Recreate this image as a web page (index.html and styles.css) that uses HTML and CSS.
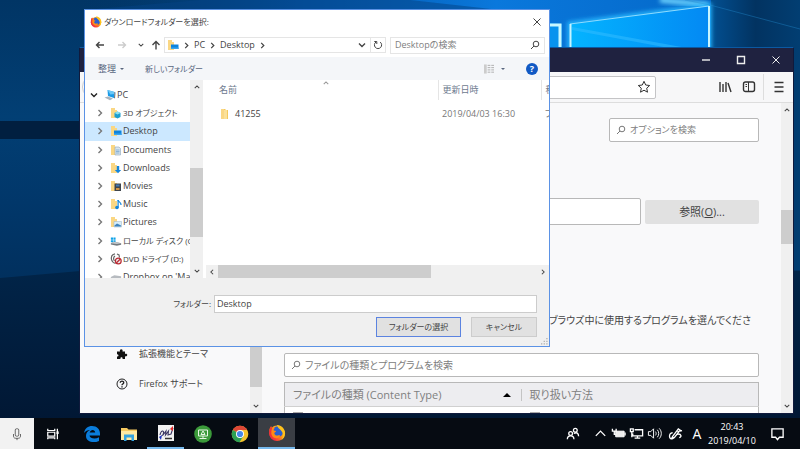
FILE: index.html
```html
<!DOCTYPE html>
<html lang="ja">
<head>
<meta charset="utf-8">
<title>ダウンロードフォルダーを選択</title>
<link rel="stylesheet" href="styles.css">
</head>
<body>
<svg class="defs" aria-hidden="true">
  <defs>
    <linearGradient id="fxg" x1="1" y1="0" x2="0" y2="1"><stop offset="0" stop-color="#ffd92e"/><stop offset=".45" stop-color="#ff9417"/><stop offset=".8" stop-color="#f5303f"/><stop offset="1" stop-color="#d4145f"/></linearGradient>
    <symbol id="firefox" viewBox="0 0 20 20">
      <circle cx="10" cy="10.4" r="8.6" fill="url(#fxg)"/>
      <circle cx="10.8" cy="8.6" r="6" fill="#2b5fd0"/>
      <path d="M10 1c5 0 9 4 9 9.500a9 9 0 0 1-4.500 7.500c2.500-3 2.500-6 1.500-8.500C15 6.500 12 5.500 11 3.500 10.500 2.500 10 1.500 10 1z" fill="#ffc21c"/>
      <path d="M1.500 7c.3-1.800 1-3.400 2-4.500.2 1 .6 1.500 1 2 1-.3 2-.2 3 .2-1 .8-1.300 1.600-1 2.500l2.500.5c.2 1-1.600 1.400-2 2.300 0 2 2 3.500 4.500 2.600 2-.3 2.500.5 1.500 1.700-1.500 2-6 2-8-.8C3.500 11 2.500 9 1.500 7z" fill="#ff8a16"/>
      <path d="M1.500 7c-.8 4 .3 8 4 10.500C3.500 14 3 10 4.500 4.500c-.4-.5-.8-1-1-2-1 1.100-1.700 2.700-2 4.500z" fill="#f0333a"/>
    </symbol>
    <symbol id="folder" viewBox="0 0 12 12"><path d="M2 1h4l1 1h2v9H2z" fill="#f4c95d"/><path d="M5 2h3v9H5z" fill="#fbe19a"/><path d="M2 1h3v10H2z" fill="#fad784"/></symbol>
    <symbol id="f-desktop" viewBox="0 0 12 12"><path d="M1 1h4v2h2v8H1z" fill="#fad784"/><path d="M4 5.500h7.500V10H4z" fill="#0c83dd"/><path d="M4 8.500h7.500V10H4z" fill="#39a5ee"/></symbol>
    <symbol id="f-3d" viewBox="0 0 12 12"><path d="M1 1h4v2h2v8H1z" fill="#fad784"/><path d="M4.500 6l3-1.500 3 1.500v4l-3 1.500-3-1.500z" fill="#1b9ed0"/><path d="M4.500 6l3-1.500 3 1.500-3 1.500z" fill="#8ae0f2"/></symbol>
    <symbol id="f-doc" viewBox="0 0 12 12"><path d="M1 1h4v2h2v8H1z" fill="#fad784"/><path d="M5 3h4l1.500 1.500V11H5z" fill="#d8e5f0" stroke="#8fa6ba" stroke-width=".6"/><path d="M6 6h3.500M6 7.500h3.500M6 9h3.500" stroke="#5790c2" stroke-width=".6"/></symbol>
    <symbol id="f-down" viewBox="0 0 12 12"><path d="M1 1h4v2h2v8H1z" fill="#fad784"/><path d="M6.800 4h2.400v4h2L8 11.300 4.800 8h2z" fill="#1385dc"/></symbol>
    <symbol id="f-movie" viewBox="0 0 12 12"><path d="M1 1h4v2h2v8H1z" fill="#fad784"/><path d="M4.500 3.500H11V11H4.500z" fill="#3f454c"/><path d="M6 4.500h3.500v2H6z" fill="#4279b5"/><path d="M6 8h3.500v2H6z" fill="#ce9144"/></symbol>
    <symbol id="f-music" viewBox="0 0 12 12"><path d="M1 1h4v2h2v8H1z" fill="#fad784"/><path d="M8 2c0 2 3.500 2 3 5" fill="none" stroke="#1385dc" stroke-width="1.200"/><path d="M7.500 2h1.200v7.500H7.500z" fill="#1385dc"/><circle cx="7" cy="9.500" r="1.800" fill="#1385dc"/></symbol>
    <symbol id="f-pic" viewBox="0 0 12 12"><path d="M1 1h4v2h2v8H1z" fill="#fad784"/><path d="M4 5.500h7.500V11H4z" fill="#d7edf9" stroke="#9ab3c5" stroke-width=".5"/><path d="M4.500 9.500l2.500-2 4 2V10.500H4.500z" fill="#3e83bd"/></symbol>
    <symbol id="pc" viewBox="0 0 12 12"><path d="M3.500 1l7 2-.5 6-6-2z" fill="#1a9be8"/><path d="M3.500 1l7 2-.2 2-4 .5z" fill="#6cc8f6"/><path d="M10.500 3l1 .5-.5 6-1-.5z" fill="#687480"/><path d="M.5 8.500L4 7.500l5 2-3 1.800z" fill="#aab4bd"/></symbol>
    <symbol id="disk" viewBox="0 0 14 12"><path d="M1 2h2.500v2.500H1zM4 2h2.500v2.500H4zM1 5h2.500v2.500H1zM4 5h2.500v2.500H4z" fill="#10a3e8"/><path d="M1 8.500L5 7l8 1.500v1.800L8 11.500 1 10z" fill="#747b80"/><path d="M1 8.500L5 7l8 1.500-5 1z" fill="#c3c8cc"/></symbol>
    <symbol id="dvd" viewBox="0 0 12 12"><path d="M5 .8C2 1.500 1 4 1.500 6.500S4 10 5.500 10.500M5 3C3.500 4 3 6 4.500 8M7 1l2 1 .5 2.500" fill="none" stroke="#666" stroke-width="1.200"/><circle cx="8.300" cy="8" r="2.900" fill="#eee" stroke="#ba2b34" stroke-width="1.200"/><path d="M6.300 10l4-4" stroke="#ba2b34" stroke-width="1.200"/></symbol>
    <symbol id="drive" viewBox="0 0 14 12"><path d="M1 6l4-2 8 1v3l-5 1-7-1z" fill="#b7bbc0"/></symbol>
    <symbol id="right" viewBox="0 0 8 8"><path d="M2.500 1l3 3-3 3" class="line bold"/></symbol>
    <symbol id="down" viewBox="0 0 8 8"><path d="M1 2.500l3 3 3-3" class="line bold"/></symbol>
    <symbol id="up" viewBox="0 0 8 8"><path d="M1 5.500l3-3 3 3" class="line bold"/></symbol>
    <symbol id="left" viewBox="0 0 8 8"><path d="M5.500 1l-3 3 3 3" class="line bold"/></symbol>
    <symbol id="arrow" viewBox="0 0 10 10"><path d="M9 5H1.500M4.500 2L1.500 5l3 3" class="line bold"/></symbol>
    <symbol id="lens" viewBox="0 0 10 10"><circle cx="6" cy="4" r="2.800" class="line"/><path d="M4 6L1 9" class="line"/></symbol>
    <symbol id="close" viewBox="0 0 10 10"><path d="M1.500 1.500l7 7M8.500 1.500l-7 7" class="line"/></symbol>
  </defs>
</svg>

<main class="desktop">
  <svg class="wallpaper" viewBox="0 0 800 449" preserveAspectRatio="none" aria-hidden="true">
    <defs>
      <linearGradient id="base" x2="0" y2="1"><stop offset="0" stop-color="#013565"/><stop offset=".26" stop-color="#023f74"/><stop offset=".45" stop-color="#01376a"/><stop offset=".62" stop-color="#01305e"/><stop offset="1" stop-color="#012a55"/></linearGradient>
      <linearGradient id="ground" x2="0" y2="1"><stop offset="0" stop-color="#012448"/><stop offset="1" stop-color="#011530"/></linearGradient>
      <linearGradient id="beam"><stop offset="0" stop-color="#023a70" stop-opacity="0"/><stop offset=".35" stop-color="#0456a8"/><stop offset=".65" stop-color="#0a78dc"/><stop offset="1" stop-color="#0468c8"/></linearGradient>
      <linearGradient id="dark"><stop offset="0" stop-color="#024f91"/><stop offset=".5" stop-color="#023361"/><stop offset="1" stop-color="#023e72"/></linearGradient>
      <linearGradient id="pane"><stop offset="0" stop-color="#04b4ff"/><stop offset="1" stop-color="#0389f3"/></linearGradient>
      <filter id="glow"><feGaussianBlur stdDeviation="2"/></filter>
    </defs>
    <path fill="url(#base)" d="M0 0h800v449H0z"/>
    <path fill="#011f40" d="M0 121h90v18H0z"/>
    <path fill="url(#ground)" d="M0 278l80-7h720v178H0z"/>
    <path fill="url(#beam)" d="M80 0h640v60H80z"/>
    <path fill="#034284" d="M200 0h210l90 10H84z" opacity=".5"/>
    <path fill="url(#dark)" d="M711 0h89v270h-89z"/>
    <path d="M660 0l48 5" stroke="#70d6ff" stroke-width="5" filter="url(#glow)"/>
    <path fill="#0793ee" d="M540 22l22 2v24h-22z"/>
    <path d="M550 25h10v22" fill="none" stroke="#c8f7ff" stroke-width="3"/>
    <path d="M570 24L709 6v42H570z" fill="none" stroke="#27b8ff" stroke-width="5" filter="url(#glow)"/>
    <path fill="url(#pane)" d="M570 24L709 6v42H570z"/>
    <path fill="#33bcff" opacity=".55" d="M572 27l115 21h-18L572 30z"/>
    <path d="M570 24L709 6" fill="none" stroke="#8edcff"/>
    <path d="M570.500 48V24M709 6v42" fill="none" stroke="#c5f4ff" stroke-width="2"/>
    <path d="M685 0l25 5 90 24" fill="none" stroke="#238bd0" opacity=".4"/>
  </svg>

  <section class="browser" aria-label="Firefox">
    <header class="browser-title">
      <button aria-label="最小化"><svg viewBox="0 0 10 10"><path d="M1 5h8" class="line bold"/></svg></button>
      <button aria-label="最大化"><svg viewBox="0 0 10 10"><path d="M1.500 1.500h7v7h-7z" class="line bold"/></svg></button>
      <button aria-label="閉じる"><svg><use href="#close"/></svg></button>
    </header>
    <div class="browser-bar">
      <button class="back" aria-label="戻る"></button>
      <div class="url">
        <input type="text" aria-label="アドレス">
        <button aria-label="ブックマーク"><svg viewBox="0 0 14 14"><path d="M7 1.300l1.700 3.700 4 .5-3 2.700.8 4L7 10.200l-3.500 2 .8-4-3-2.700 4-.5z" class="line"/></svg></button>
      </div>
      <div class="bar-tools">
        <button aria-label="ライブラリ"><svg viewBox="0 0 14 14"><path d="M2 2v10M5 4v8M8 2v10M10 3l3 9" class="line bold"/></svg></button>
        <button aria-label="サイドバー"><svg viewBox="0 0 14 14"><rect x="1.500" y="2" width="11" height="9.500" rx="2" class="line bold"/><path d="M6.500 2v9.500M3.500 4.500h1.500M3.500 6.500h1.500" class="line"/></svg></button>
      </div>
      <button class="menu" aria-label="メニュー"><svg viewBox="0 0 14 14"><path d="M2.500 2.500h9M2.500 7h9M2.500 11.500h9" class="line bold"/></svg></button>
    </div>
    <div class="browser-body">
      <nav class="categories">
        <a href="#"><svg viewBox="0 0 12 12"><path d="M1 3.500h3c-1-3 3.500-3 2.500 0H9V6c3-1 3 3 0 2.300V11H6.500c.8-2.500-2.800-2.500-2 0H1V8.500c2 .5 2-2.800 0-2.300z" fill="#111"/></svg>拡張機能とテーマ</a>
        <a href="#"><svg viewBox="0 0 12 12"><circle cx="6" cy="6" r="5" class="line"/><path d="M4.300 4.800c0-2.300 3.500-2.100 3.400 0C7.600 6 6 6 6 7.200M6 8.200v1.200" class="line bold"/></svg>Firefox サポート</a>
      </nav>
      <div class="vscroll side-scroll"><span class="thumb"></span><svg><use href="#down"/></svg></div>
      <div class="prefs">
        <label class="field option-search"><svg><use href="#lens"/></svg><input type="text" placeholder="オプションを検索" aria-label="オプションを検索"></label>
        <div class="save-to"><input type="text" aria-label="保存先"><button>参照(<u>O</u>)...</button></div>
        <p>ブラウズ中に使用するプログラムを選んでくださ</p>
        <label class="field type-search"><svg><use href="#lens"/></svg><input type="text" placeholder="ファイルの種類とプログラムを検索" aria-label="ファイルの種類とプログラムを検索"></label>
        <table class="types">
          <thead><tr><th><div><span>ファイルの種類 (Content Type)</span><svg viewBox="0 0 8 8"><path d="M0 6l4-4 4 4z"/></svg></div></th><th>取り扱い方法</th></tr></thead>
          <tbody><tr><td><i></i></td><td><i></i></td></tr></tbody>
        </table>
      </div>
      <div class="vscroll page-scroll"><svg><use href="#up"/></svg><span class="thumb"></span><svg><use href="#down"/></svg></div>
    </div>
  </section>

  <section class="dialog" role="dialog" aria-labelledby="dlg-title">
    <header class="dialog-title"><svg class="fx"><use href="#firefox"/></svg><h1 id="dlg-title">ダウンロードフォルダーを選択:</h1><button aria-label="閉じる"><svg><use href="#close"/></svg></button></header>
    <div class="dialog-nav">
      <button aria-label="戻る"><svg><use href="#arrow"/></svg></button>
      <button class="faint" aria-label="進む"><svg class="flip"><use href="#arrow"/></svg></button>
      <button class="recent" aria-label="最近の場所"><svg><use href="#down"/></svg></button>
      <button class="parent" aria-label="上へ"><svg viewBox="0 0 10 10"><path d="M5 9.500v-8M1.500 5L5 1.500 8.500 5" class="line bold"/></svg></button>
      <div class="path">
        <svg class="ico"><use href="#f-desktop"/></svg><svg class="sep"><use href="#right"/></svg><a href="#">PC</a><svg class="sep"><use href="#right"/></svg><a href="#">Desktop</a><svg class="sep"><use href="#right"/></svg>
        <button class="history" aria-label="履歴"><svg><use href="#down"/></svg></button>
        <button class="reload" aria-label="更新"><svg viewBox="0 0 10 10"><path d="M3 2a3.600 3.600 0 1 0 4.200.1M1.300 1.500h2.500V4" class="line"/></svg></button>
      </div>
      <label class="find"><input type="text" placeholder="Desktopの検索" aria-label="Desktopの検索"><svg><use href="#lens"/></svg></label>
    </div>
    <div class="dialog-tools">
      <button>整理<span class="caret"></span></button>
      <button class="new">新しいフォルダー</button>
      <button class="view" aria-label="表示方法"><svg viewBox="0 0 11 10"><path d="M0 0h3v10H0z" fill="#ccc"/><path d="M4 1h3M8 1h3M4 3.500h3M8 3.500h3M4 6h3M8 6h3M4 8.500h3M8 8.500h3" stroke="#aaa"/></svg><span class="caret"></span></button>
      <button class="help" aria-label="ヘルプ">?</button>
    </div>
    <div class="dialog-body">
      <ul class="tree">
        <li class="root"><svg class="tw"><use href="#down"/></svg><svg class="ico"><use href="#pc"/></svg>PC</li>
        <li class="kana"><svg class="tw"><use href="#right"/></svg><svg class="ico"><use href="#f-3d"/></svg>3D オブジェクト</li>
        <li class="selected"><svg class="tw"><use href="#right"/></svg><svg class="ico"><use href="#f-desktop"/></svg>Desktop</li>
        <li><svg class="tw"><use href="#right"/></svg><svg class="ico"><use href="#f-doc"/></svg>Documents</li>
        <li><svg class="tw"><use href="#right"/></svg><svg class="ico"><use href="#f-down"/></svg>Downloads</li>
        <li><svg class="tw"><use href="#right"/></svg><svg class="ico"><use href="#f-movie"/></svg>Movies</li>
        <li><svg class="tw"><use href="#right"/></svg><svg class="ico"><use href="#f-music"/></svg>Music</li>
        <li><svg class="tw"><use href="#right"/></svg><svg class="ico"><use href="#f-pic"/></svg>Pictures</li>
        <li class="kana"><svg class="tw"><use href="#right"/></svg><svg class="ico"><use href="#disk"/></svg>ローカル ディスク (C:)</li>
        <li class="kana"><svg class="tw"><use href="#right"/></svg><svg class="ico"><use href="#dvd"/></svg>DVD ドライブ (D:)</li>
        <li><svg class="tw"><use href="#right"/></svg><svg class="ico"><use href="#drive"/></svg>Dropbox on 'Mac'</li>
      </ul>
      <div class="vscroll tree-scroll"><svg><use href="#up"/></svg><span class="thumb"></span><svg><use href="#down"/></svg></div>
      <div class="files">
        <svg class="sort"><use href="#up"/></svg>
        <table>
          <thead><tr><th>名前</th><th>更新日時</th><th>種類</th></tr></thead>
          <tbody><tr><td><svg class="ico"><use href="#folder"/></svg>41255</td><td>2019/04/03 16:30</td><td>ファイル</td></tr></tbody>
        </table>
        <div class="hscroll"><svg><use href="#left"/></svg><span class="thumb"></span><svg><use href="#right"/></svg></div>
      </div>
    </div>
    <footer class="dialog-foot">
      <div class="name-row"><label for="folder-name">フォルダー:</label><input id="folder-name" type="text" value="Desktop"></div>
      <div class="actions"><button class="primary">フォルダーの選択</button><button>キャンセル</button></div>
      <svg class="grip" viewBox="0 0 8 8"><path d="M6 0h1.500v1.500H6zM3 3h1.500v1.500H3zM6 3h1.500v1.500H6zM0 6h1.500v1.500H0zM3 6h1.500v1.500H3zM6 6h1.500v1.500H6z" fill="#b0b0b0"/></svg>
    </footer>
  </section>
</main>

<footer class="taskbar">
  <button class="mic" aria-label="音声検索"><svg viewBox="0 0 16 16"><rect x="6" y="2" width="4" height="8.500" rx="1.500" class="line"/><path d="M4 8v2.500c0 2 1.500 2.500 4 2.500s4-.5 4-2.500V8M8 13v2" class="line"/></svg></button>
  <button class="tasks" aria-label="タスクビュー"><svg viewBox="0 0 16 16"><path d="M2 2v2h8V2M2 6h8v4.500H2zM2 14v-1.500h8V14M13 2v12" class="line bold"/><path d="M12 5h2.500v3H12z" fill="#fff"/></svg></button>
  <button aria-label="Edge"><svg viewBox="0 0 18 18"><path d="M1 8C1.800 3.500 5 1 9 1c5 0 8 3.500 8 7.500v2H6.500c.3 3 5.500 4.200 9.500 1.800v3.600C10.500 18.500 3 17 3 11 3 8 4.500 6 7 5 4.500 5 2.500 6 1 8zm5.700-.5h5.500C12 4 7.500 4 6.700 7.500z" fill="#0a7ddc"/></svg></button>
  <button aria-label="エクスプローラー"><svg viewBox="0 0 18 18"><path d="M1 3h6l1.500 1.500H17V15H1z" fill="#f5ca61"/><path d="M1 6h16v9H1z" fill="#ffe9a2"/><path d="M4 9.500h10V16h-2.500v-3.500h-5V16H4z" fill="#35a3df"/></svg></button>
  <button class="open" aria-label="アプリ"><svg viewBox="0 0 18 18"><path d="M1 1h16v16H1z" fill="#f2f2f2"/><path d="M3 11c1-5 4-5 3.500-2S4 11.500 6 11l3-4-.5 4 3-4-.5 4 3-1 2-6" fill="none" stroke="#3b3764" stroke-width="1.100"/><path d="M2 13l2 3 1-5z" fill="#1930c2"/><path d="M13 5l3-3v5z" fill="#e12a2a"/><path d="M8 14.500h7" stroke="#333" stroke-width="1.500"/></svg></button>
  <button aria-label="リモート接続"><svg viewBox="0 0 18 18"><circle cx="9" cy="9" r="8.800" fill="#3b9a3a"/><path d="M4.500 5h9v6h-9zM9 11v2M5.500 13.500h7" fill="none" stroke="#e7f6e3"/><path d="M7 9.500l2-3.500 2 3.500z" fill="none" stroke="#e7f6e3"/></svg></button>
  <button aria-label="Chrome"><svg viewBox="0 0 18 18"><circle cx="9" cy="9" r="8.300" fill="#f3c22c"/><path d="M9 9L1.800 4.900A8.300 8.300 0 0 1 16.200 5H9z" fill="#dd4736"/><path d="M9 9l-7.200-4.100A8.300 8.300 0 0 0 8.500 17.300L12.500 11z" fill="#2da054"/><circle cx="9" cy="9" r="4" fill="#fff"/><circle cx="9" cy="9" r="3.100" fill="#4688e9"/></svg></button>
  <button class="open active" aria-label="Firefox"><svg><use href="#firefox"/></svg></button>
  <div class="tray">
    <button class="people" aria-label="People"><svg viewBox="0 0 16 16"><circle cx="6" cy="8" r="2" class="line bold"/><path d="M2.500 14c0-4.500 7-4.500 7 0" class="line bold"/><circle cx="11" cy="4.500" r="2" class="line bold"/><path d="M9.500 8c3-2 5 0 5 3" class="line bold"/></svg></button>
    <button aria-label="隠れているインジケーター"><svg viewBox="0 0 16 16"><path d="M3 10.500l5-5 5 5" class="line bold"/></svg></button>
    <button aria-label="電源"><svg viewBox="0 0 16 16"><path d="M5 5.500h9v6H5z" fill="#eee" stroke="#fff"/><path d="M15 7v3M1.500 3v2.500h4V3M3.500 5.500V9H5" class="line bold"/></svg></button>
    <button aria-label="ネットワーク"><svg viewBox="0 0 16 16"><path d="M6 4h8.500v6.500H4V8M9 10.500V13M6 13h6M1.500 3h3v3h-3zM3 6v6" class="line bold"/></svg></button>
    <button aria-label="音量"><svg viewBox="0 0 16 16"><path d="M1.500 6H4l3-3v10l-3-3H1.500zM9 6c1 1 1 3 0 4M11 4c2 2 2 6 0 8M13 2.500c3 3 3 8 0 11" class="line"/></svg></button>
    <button class="pen" aria-label="ペン"><svg viewBox="0 0 16 16"><path d="M5 11l6-8 2 1.500L7 12l-3 1zM5 7C0 8 1 15 5 13.500s3-5 6-5 4 3 1 4M10 6l5-1" class="line bold"/></svg></button>
    <button class="ime" aria-label="IME">A</button>
    <time class="clock"><span>20:43</span><span>2019/04/10</span></time>
    <button class="notify" aria-label="通知"><svg viewBox="0 0 16 16"><path d="M2 3h12v9h-4l-2 2.500L6 12H2z" class="line bold"/></svg></button>
  </div>
</footer>
</body>
</html>
```
FILE: styles.css
```css
* { box-sizing: border-box; }

body {
  margin: 0;
  height: 100vh;
  display: flex;
  flex-direction: column;
  overflow: hidden;
  color: #444;
  font: 9px/12px "Open Sans", "Noto Sans CJK JP", sans-serif;
  font-feature-settings: "palt";
}

button, input {
  margin: 0;
  padding: 0;
  border: 0;
  background: none;
  color: inherit;
  font: inherit;
  font-feature-settings: inherit;
}
button { display: flex; align-items: center; justify-content: center; }
input { min-width: 0; }
a { color: inherit; text-decoration: none; }
svg { display: block; flex: none; width: 10px; height: 10px; }
.defs { position: absolute; width: 0; height: 0; }
.line { fill: none; stroke: currentColor; stroke-width: 1; }
.line.bold { stroke-width: 1.400; }

.desktop { position: relative; flex: 1; background: #012450; }
.wallpaper { position: absolute; top: 0; left: 0; width: 100%; height: 100vh; }

/* Browser window */
.browser {
  position: absolute;
  inset: 47px 6px 4px 79px;
  display: flex;
  flex-direction: column;
  border: 1px solid #101a3c;
  border-top-color: #0b59a2;
  background: #f9f9fa;
  overflow: hidden;
}
.browser-title { display: flex; justify-content: flex-end; height: 24px; background: #1f2240; color: #eee; }
.browser-title button { width: 35px; }
.browser-bar { display: flex; align-items: center; height: 31px; background: #f7f7f8; border-bottom: 1px solid #ddd; color: #333; }
.back { width: 24px; height: 24px; margin-left: 2px; border: 1px solid #ccc; border-radius: 50%; background: #fff; }
.url { flex: 1; display: flex; height: 23px; margin-left: 60px; border: 1px solid #c4c4c6; border-radius: 2px; background: #fff; }
.url input { flex: 1; }
.url button { width: 22px; }
.browser-bar svg { width: 14px; height: 14px; }
.bar-tools { display: flex; gap: 10px; padding: 0 7px 0 62px; }
.menu { width: 30px; height: 26px; border-left: 1px solid #ddd; }
.browser-body { flex: 1; display: flex; min-height: 0; }
.categories { width: 170px; display: flex; flex-direction: column; justify-content: flex-end; gap: 14px; padding: 0 0 21px 36px; line-height: 16px; }
.categories a { display: flex; align-items: center; gap: 11px; }
.categories svg { width: 12px; height: 12px; color: #222; }

.vscroll { width: 12px; display: flex; flex-direction: column; align-items: center; justify-content: space-between; background: #f0f0f0; color: #444; }
.vscroll svg { width: 6px; height: 6px; margin: 4px 0; }
.thumb { background: #cdcdcd; }
.vscroll .thumb { width: 100%; }
.side-scroll .thumb { flex: 1; margin-bottom: 12px; }
.page-scroll .thumb { height: 34px; margin-bottom: 62px; }

.prefs { flex: 1; min-width: 0; padding: 15px 22px 0; font-size: 10px; overflow: hidden; }
.field { display: flex; align-items: center; gap: 4px; height: 24px; padding: 0 6px; border: 1px solid #b8b8b8; border-radius: 2px; background: #fff; color: #777; }
.field input { flex: 1; }
.field input::placeholder { color: #808080; opacity: 1; }
.option-search { width: 150px; margin-left: auto; font-size: 9px; }
.save-to { display: flex; align-items: center; gap: 4px; margin-top: 56px; }
.save-to input { flex: 1; height: 27px; border: 1px solid #b8b8b8; border-radius: 2px; background: #fff; }
.save-to button { display: block; width: 114px; height: 24px; border-radius: 2px; background: #e1e1e1; font-size: 11px; }
.prefs p { margin: 87px 8px 25px 0; line-height: 16px; text-align: right; white-space: nowrap; }
.types { width: 100%; margin-top: 5px; border: 1px solid #b8b8b8; border-collapse: collapse; background: #fff; font-size: 11px; color: #808080; }
.types th { height: 24px; padding: 0 8px; border-bottom: 1px solid #d0d0d0; background: #ededf0; font-weight: normal; text-align: left; }
.types th:first-child { width: 50%; }
.types th div { display: flex; align-items: center; justify-content: space-between; margin-right: -8px; padding-right: 10px; border-right: 1px solid #c4c4c4; }
.types th svg { width: 8px; height: 8px; }
.types td { padding: 5px 8px; }
.types i { display: block; width: 10px; height: 10px; border: 1px solid #aaa; background: #eee; }

/* Folder picker */
.dialog {
  position: absolute;
  top: 9px;
  left: 84px;
  right: 250px;
  border: 1px solid #5b92e5;
  background: #fff;
}
.dialog-title { display: flex; align-items: center; height: 23px; padding-left: 5px; }
.dialog-title h1 { flex: 1; margin: 0 0 0 2px; font-size: 8px; font-weight: normal; }
.dialog-title .fx { width: 12px; height: 12px; }
.dialog-title button { width: 25px; height: 20px; }
.dialog-nav { display: flex; align-items: center; height: 24px; padding: 0 4px 0 5px; }
.dialog-nav button { width: 20px; height: 16px; }
.dialog-nav .faint { width: 24px; color: #ccc; }
.dialog-nav .recent { width: 14px; }
.dialog-nav .parent { width: 16px; }
.recent svg { width: 6px; height: 6px; }
.flip { transform: scaleX(-1); }
.path { flex: 1; display: flex; align-items: center; height: 16px; padding-left: 2px; border: 1px solid #e5e5e5; }
.path .ico { width: 12px; height: 12px; }
.sep { width: 7px; height: 7px; margin: 0 4px; }
.path .history { width: 16px; margin-left: auto; }
.history svg { width: 8px; height: 8px; }
.path .reload { width: 15px; height: 100%; border-left: 1px solid #e5e5e5; }
.find { display: flex; align-items: center; width: 155px; height: 17px; margin-left: 4px; padding: 0 4px; border: 1px solid #e5e5e5; }
.find input { flex: 1; }
.find input::placeholder { color: #808080; opacity: 1; }
.dialog-tools { display: flex; align-items: center; height: 23px; padding: 0 11px 0 13px; background: #f4f6f9; color: #59677f; }
.caret { width: 0; height: 0; margin-left: 4px; border: 2px solid transparent; border-top-color: currentColor; border-bottom: 0; }
.dialog-tools .new { margin-left: 21px; font-size: 8px; }
.dialog-tools .view { margin-left: auto; }
.view .caret { margin-left: 7px; }
.dialog-tools .help { width: 12px; height: 12px; margin-left: 21px; border-radius: 50%; background: #1159c4; color: #fff; font-weight: bold; }
.dialog-body { display: flex; height: 198px; }
.tree { display: grid; grid-auto-rows: 1fr; width: 105px; height: 206px; margin: 0 0 -8px; padding: 6px 0 0; list-style: none; }
.dialog-body { overflow: hidden; }
.tree li { display: flex; align-items: center; padding-left: 11px; white-space: nowrap; overflow: hidden; }
.tree .root { padding-left: 5px; }
.tree .kana { font-size: 8px; }
.tree .ico { width: 12px; height: 12px; margin: 0 1px 0 6px; }
.tree .tw { width: 8px; height: 8px; color: #777; }
.tree .root .tw { color: #222; }
.tree .selected { background: #cce8ff; }
.tree-scroll { width: 13px; }
.tree-scroll .thumb { height: 69px; margin: 60px 0 14px; }
.files { position: relative; flex: 1; min-width: 0; display: flex; flex-direction: column; margin-left: 3px; overflow: hidden; }
.sort { position: absolute; top: 0; left: 117px; width: 6px; height: 6px; color: #999; }
.files table { width: 100%; table-layout: fixed; border-collapse: collapse; color: #777; white-space: nowrap; }
.files th { height: 20px; padding: 0 0 0 4px; border-right: 1px solid #e5e5e5; color: #6d7a8e; font-weight: normal; text-align: left; }
.files th:first-child { padding-left: 13px; }
.files th:nth-child(2) { width: 103px; }
.files th:last-child { width: 8px; border: 0; }
.files td { height: 27px; padding: 0 0 0 4px; overflow: hidden; }
.files th:last-child, .files td:last-child { overflow: hidden; text-overflow: clip; }
.files td:first-child { display: flex; align-items: center; padding-left: 13px; color: #444; }
.files td .ico { width: 12px; height: 12px; margin-right: 4px; }
.hscroll { display: flex; align-items: center; height: 13px; margin-top: auto; background: #f0f0f0; }
.hscroll svg { width: 6px; height: 6px; margin: 0 3px; }
.hscroll .thumb { width: 213px; height: 100%; margin-right: auto; }
.dialog-foot { position: relative; padding: 17px 12px 9px; background: #f0f0f0; }
.name-row { display: flex; align-items: center; justify-content: flex-end; gap: 3px; }
.name-row label, .actions button { font-size: 8px; }
.name-row input { flex: 0 1 323px; height: 18px; padding: 0 2px 2px; border: 1px solid #ccc; background: #fff; }
.actions { display: flex; justify-content: flex-end; gap: 10px; margin-top: 4px; }
.actions button { width: 66px; height: 20px; border: 1px solid #ccc; background: #e1e1e1; }
.actions .primary { width: 85px; border-color: #5b83e0; }
.grip { position: absolute; right: 1px; bottom: 1px; width: 7px; height: 7px; }

/* Taskbar */
.taskbar { position: relative; display: flex; height: 31px; background: #060b12; color: #fff; }
.taskbar button { width: 37px; }
.taskbar > button svg { width: 18px; height: 18px; }
.taskbar .mic { width: 34px; background: #f2f2f2; color: #555; }
.taskbar .mic svg, .taskbar .tasks svg { width: 14px; height: 14px; }
.taskbar .tasks { margin-right: 2px; }
.open { border-bottom: 2px solid #76b9ed; }
.active { background: #3a3e44; }
.tray { display: flex; align-items: center; margin-left: auto; padding-right: 3px; }
.tray svg { width: 15px; height: 15px; }
.tray button { width: 18px; height: 100%; }
.tray .people { margin-right: 10px; }
.tray .pen { width: 24px; }
.tray .ime { width: 20px; font-size: 14px; }
.clock { display: flex; flex-direction: column; align-items: center; width: 50px; line-height: 14px; }
.tray .notify { width: 40px; }
```
